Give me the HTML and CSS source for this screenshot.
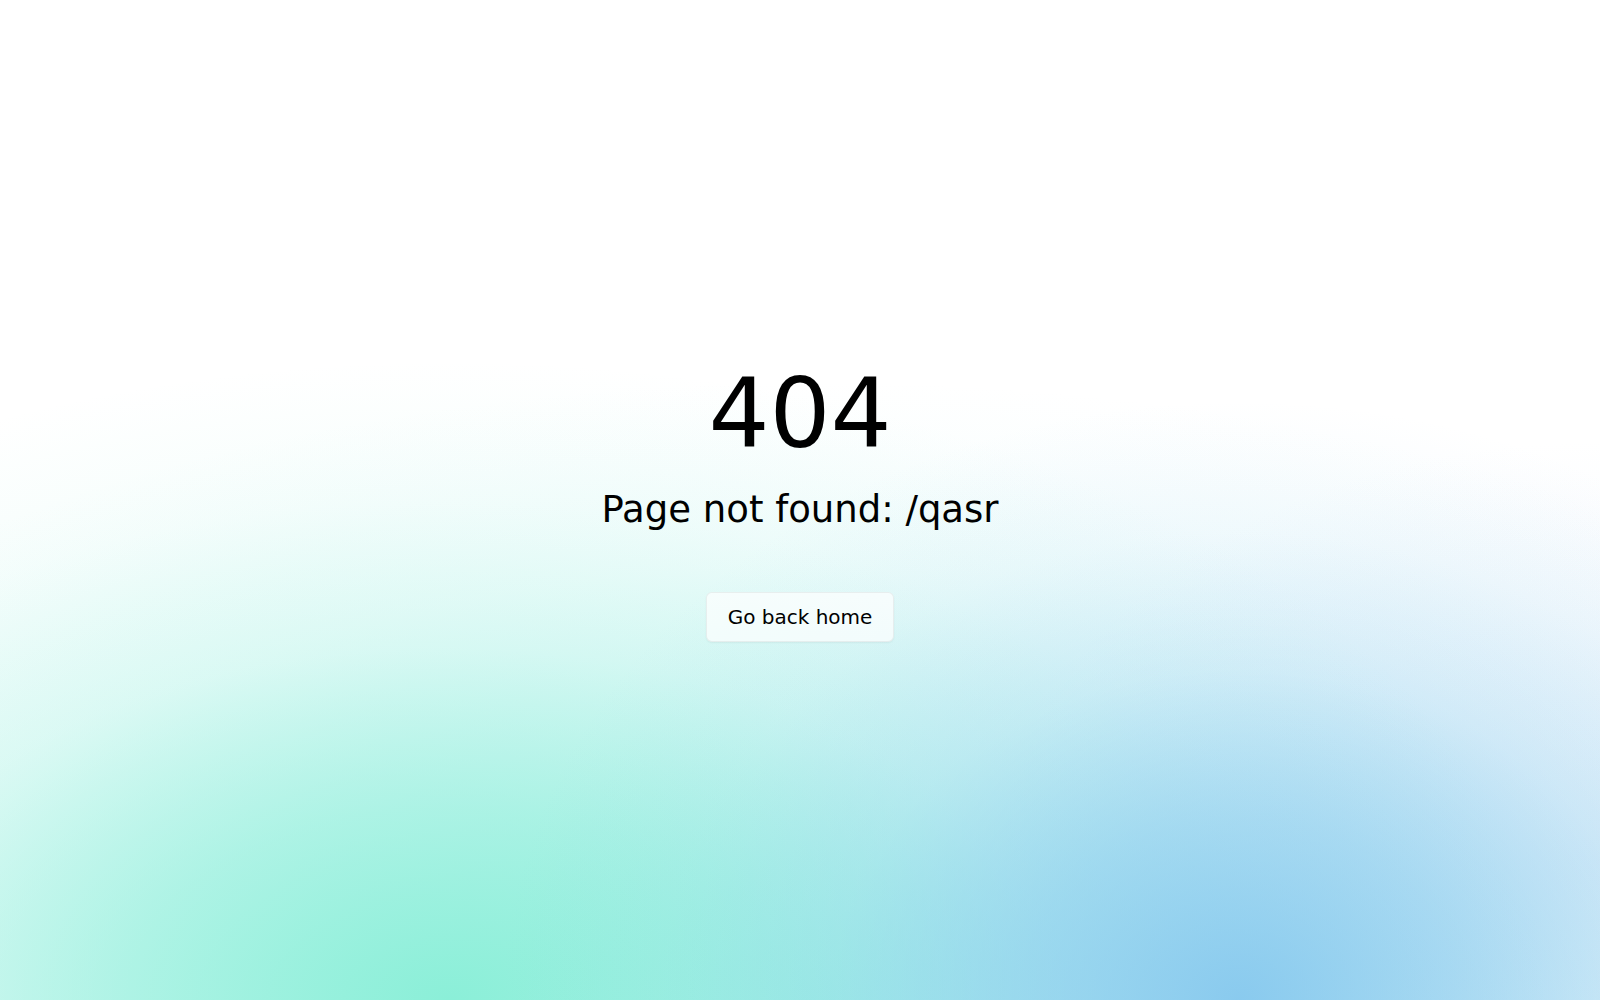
FILE: index.html
```html
<!DOCTYPE html>
<html lang="en">
<head>
<meta charset="utf-8">
<title>404</title>
<link rel="stylesheet" href="styles.css">
</head>
<body>
<main class="notfound">
  <h1 class="code">404</h1>
  <p class="message">Page not found: /qasr</p>
  <a class="home-btn" href="#">Go back home</a>
</main>
</body>
</html>
```

FILE: styles.css
```css
html, body {
  margin: 0;
  padding: 0;
  height: 100%;
}

body {
  font-family: "DejaVu Sans", sans-serif;
  color: #000000;
  background-color: #ffffff;
  background-image:
    radial-gradient(ellipse 740px 600px at 1240px 1000px, rgba(134, 200, 238, 0.95) 0%, rgba(134, 200, 238, 0.6) 30%, rgba(134, 200, 238, 0.25) 55%, rgba(134, 200, 238, 0.08) 78%, rgba(134, 200, 238, 0) 100%),
    radial-gradient(ellipse 1100px 640px at 450px 1000px, rgba(139, 239, 216, 1) 0%, rgba(139, 239, 216, 0.62) 30%, rgba(139, 239, 216, 0.25) 55%, rgba(139, 239, 216, 0.08) 78%, rgba(139, 239, 216, 0) 100%),
    radial-gradient(ellipse 1300px 620px at 820px 1000px, rgba(150, 232, 236, 0.65) 0%, rgba(150, 232, 236, 0.3) 40%, rgba(150, 232, 236, 0.1) 70%, rgba(150, 232, 236, 0) 100%),
    radial-gradient(ellipse 600px 420px at 1600px 860px, rgba(200, 215, 245, 0.35) 0%, rgba(200, 215, 245, 0.12) 60%, rgba(200, 215, 245, 0) 100%);
  background-repeat: no-repeat;
}

.notfound {
  min-height: 100vh;
  display: flex;
  flex-direction: column;
  align-items: center;
  justify-content: center;
  text-align: center;
}

.code {
  margin: 0;
  font-size: 96px;
  font-weight: 400;
  line-height: normal;
}

.message {
  margin: 18px 0 0;
  font-size: 37px;
  line-height: normal;
}

.home-btn {
  margin-top: 61px;
  padding: 12px 21px;
  font-size: 20px;
  line-height: normal;
  color: #000000;
  text-decoration: none;
  background: rgba(255, 255, 255, 0.7);
  border: 1px solid rgba(0, 0, 0, 0.06);
  border-radius: 6px;
  box-shadow: 0 1px 2px rgba(0, 0, 0, 0.05);
}
```
